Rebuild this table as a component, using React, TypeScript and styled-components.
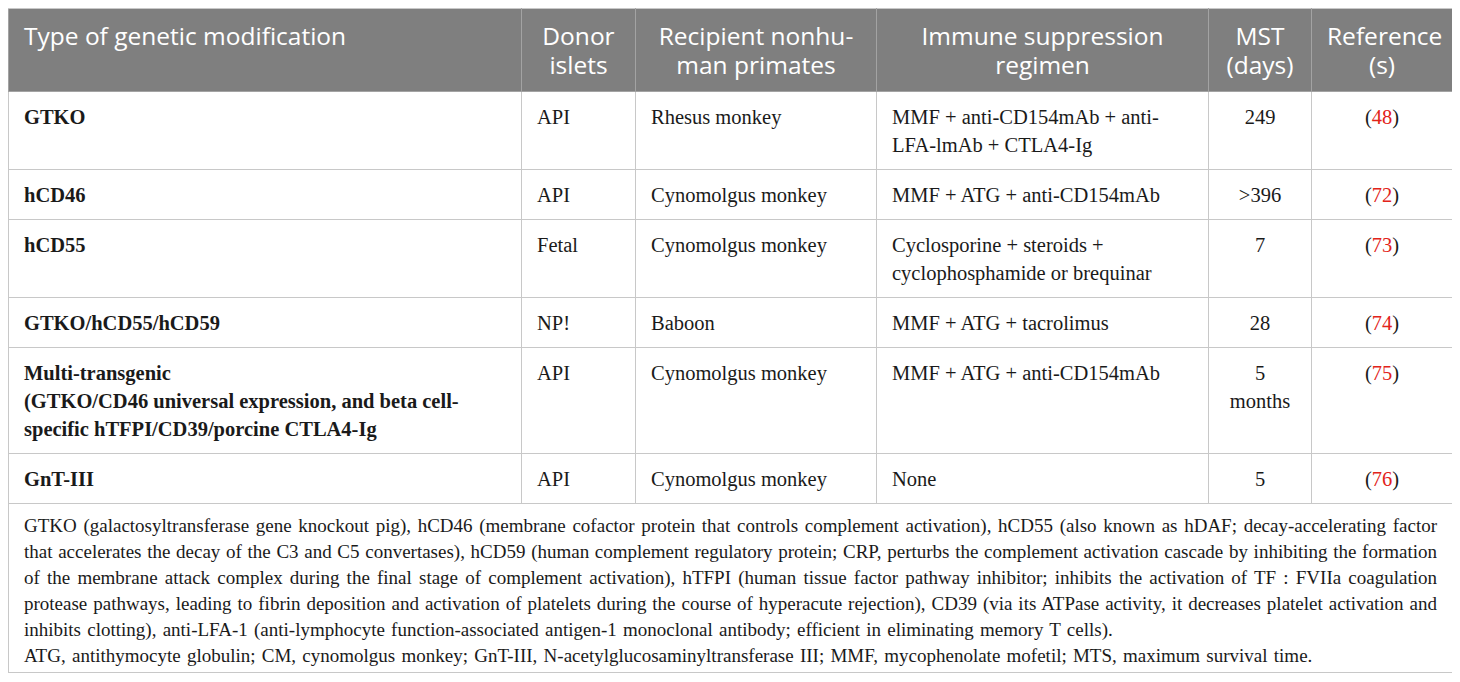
import React from 'react';
import styled, { createGlobalStyle } from 'styled-components';

const GlobalStyle = createGlobalStyle`
  body {
    margin: 8px;
    background: #ffffff;
  }
`;

const Table = styled.table`
  width: 1444px;
  border-collapse: collapse;
  table-layout: fixed;
  font-family: 'Liberation Serif', 'Times New Roman', serif;
  color: #1a1a1a;
`;

const HeadCell = styled.th<{ $align?: 'left' | 'center' }>`
  background: #7f7f7f;
  color: #ffffff;
  font-family: 'Open Sans', 'Liberation Sans', sans-serif;
  font-weight: 400;
  font-size: 24.5px;
  line-height: 29px;
  text-align: ${(p) => p.$align || 'center'};
  vertical-align: top;
  padding: 12px 15px;
  border: 1px solid #a3a3a3;
  border-top-color: #c8c8c8;
`;

const Cell = styled.td<{ $align?: 'left' | 'center'; $bold?: boolean }>`
  font-size: 20.5px;
  line-height: 28px;
  font-weight: ${(p) => (p.$bold ? 700 : 400)};
  text-align: ${(p) => p.$align || 'left'};
  vertical-align: top;
  padding: 11px 15px 10px 15px;
  border: 1px solid #c8c8c8;
`;

const RefLink = styled.span`
  color: #e2231a;
`;

const Note = styled.td`
  font-size: 19px;
  line-height: 26px;
  padding: 9px 15px 3px 15px;
  border: 1px solid #c8c8c8;
  overflow: hidden;
`;

const NoteLine = styled.span<{ $last?: boolean }>`
  display: block;
  text-align: justify;
  text-align-last: ${(p) => (p.$last ? 'left' : 'justify')};
  word-spacing: ${(p) => (p.$last ? '1.5px' : '0')};
`;

type Row = {
  type: React.ReactNode;
  donor: string;
  recipient: string;
  regimen: React.ReactNode;
  mst: React.ReactNode;
  ref: string;
};

const rows: Row[] = [
  {
    type: 'GTKO',
    donor: 'API',
    recipient: 'Rhesus monkey',
    regimen: (
      <>
        MMF + anti-CD154mAb + anti-
        <br />
        LFA-lmAb + CTLA4-Ig
      </>
    ),
    mst: '249',
    ref: '48',
  },
  { type: 'hCD46', donor: 'API', recipient: 'Cynomolgus monkey', regimen: 'MMF + ATG + anti-CD154mAb', mst: '>396', ref: '72' },
  {
    type: 'hCD55',
    donor: 'Fetal',
    recipient: 'Cynomolgus monkey',
    regimen: (
      <>
        Cyclosporine + steroids +
        <br />
        cyclophosphamide or brequinar
      </>
    ),
    mst: '7',
    ref: '73',
  },
  { type: 'GTKO/hCD55/hCD59', donor: 'NP!', recipient: 'Baboon', regimen: 'MMF + ATG + tacrolimus', mst: '28', ref: '74' },
  {
    type: (
      <>
        Multi-transgenic
        <br />
        (GTKO/CD46 universal expression, and beta cell-
        <br />
        specific hTFPI/CD39/porcine CTLA4-Ig
      </>
    ),
    donor: 'API',
    recipient: 'Cynomolgus monkey',
    regimen: 'MMF + ATG + anti-CD154mAb',
    mst: (
      <>
        5
        <br />
        months
      </>
    ),
    ref: '75',
  },
  { type: 'GnT-III', donor: 'API', recipient: 'Cynomolgus monkey', regimen: 'None', mst: '5', ref: '76' },
];

// footnote kept in the same line breaks as the printed table
const noteLines = [
  'GTKO (galactosyltransferase gene knockout pig), hCD46 (membrane cofactor protein that controls complement activation), hCD55 (also known as hDAF; decay-accelerating factor',
  'that accelerates the decay of the C3 and C5 convertases), hCD59 (human complement regulatory protein; CRP, perturbs the complement activation cascade by inhibiting the formation',
  'of the membrane attack complex during the final stage of complement activation), hTFPI (human tissue factor pathway inhibitor; inhibits the activation of TF : FVIIa coagulation',
  'protease pathways, leading to fibrin deposition and activation of platelets during the course of hyperacute rejection), CD39 (via its ATPase activity, it decreases platelet activation and',
];

const App: React.FC = () => {
  return (
    <>
      <GlobalStyle />
      <Table>
        <colgroup>
          <col style={{ width: 513 }} />
          <col style={{ width: 114 }} />
          <col style={{ width: 241 }} />
          <col style={{ width: 332 }} />
          <col style={{ width: 103 }} />
          <col style={{ width: 141 }} />
        </colgroup>
        <thead>
          <tr>
            <HeadCell $align="left">Type of genetic modification</HeadCell>
            <HeadCell>
              Donor
              <br />
              islets
            </HeadCell>
            <HeadCell>
              Recipient nonhu-
              <br />
              man primates
            </HeadCell>
            <HeadCell>
              Immune suppression
              <br />
              regimen
            </HeadCell>
            <HeadCell>
              MST
              <br />
              (days)
            </HeadCell>
            <HeadCell>
              Reference
              <br />
              (s)
            </HeadCell>
          </tr>
        </thead>
        <tbody>
          {rows.map((r) => (
            <tr key={r.ref}>
              <Cell $bold>{r.type}</Cell>
              <Cell>{r.donor}</Cell>
              <Cell>{r.recipient}</Cell>
              <Cell>{r.regimen}</Cell>
              <Cell $align="center">{r.mst}</Cell>
              <Cell $align="center">
                (<RefLink>{r.ref}</RefLink>)
              </Cell>
            </tr>
          ))}
        </tbody>
        <tfoot>
          <tr>
            <Note colSpan={6}>
              {noteLines.map((line) => (
                <NoteLine key={line}>{line}</NoteLine>
              ))}
              <NoteLine $last>
                inhibits clotting), anti-LFA-1 (anti-lymphocyte function-associated antigen-1 monoclonal antibody;
                efficient in eliminating memory T cells).
              </NoteLine>
              <NoteLine $last>
                ATG, antithymocyte globulin; CM, cynomolgus monkey; GnT-III, N-acetylglucosaminyltransferase III; MMF,
                mycophenolate mofetil; MTS, maximum survival time.
              </NoteLine>
            </Note>
          </tr>
        </tfoot>
      </Table>
    </>
  );
};

export default App;
